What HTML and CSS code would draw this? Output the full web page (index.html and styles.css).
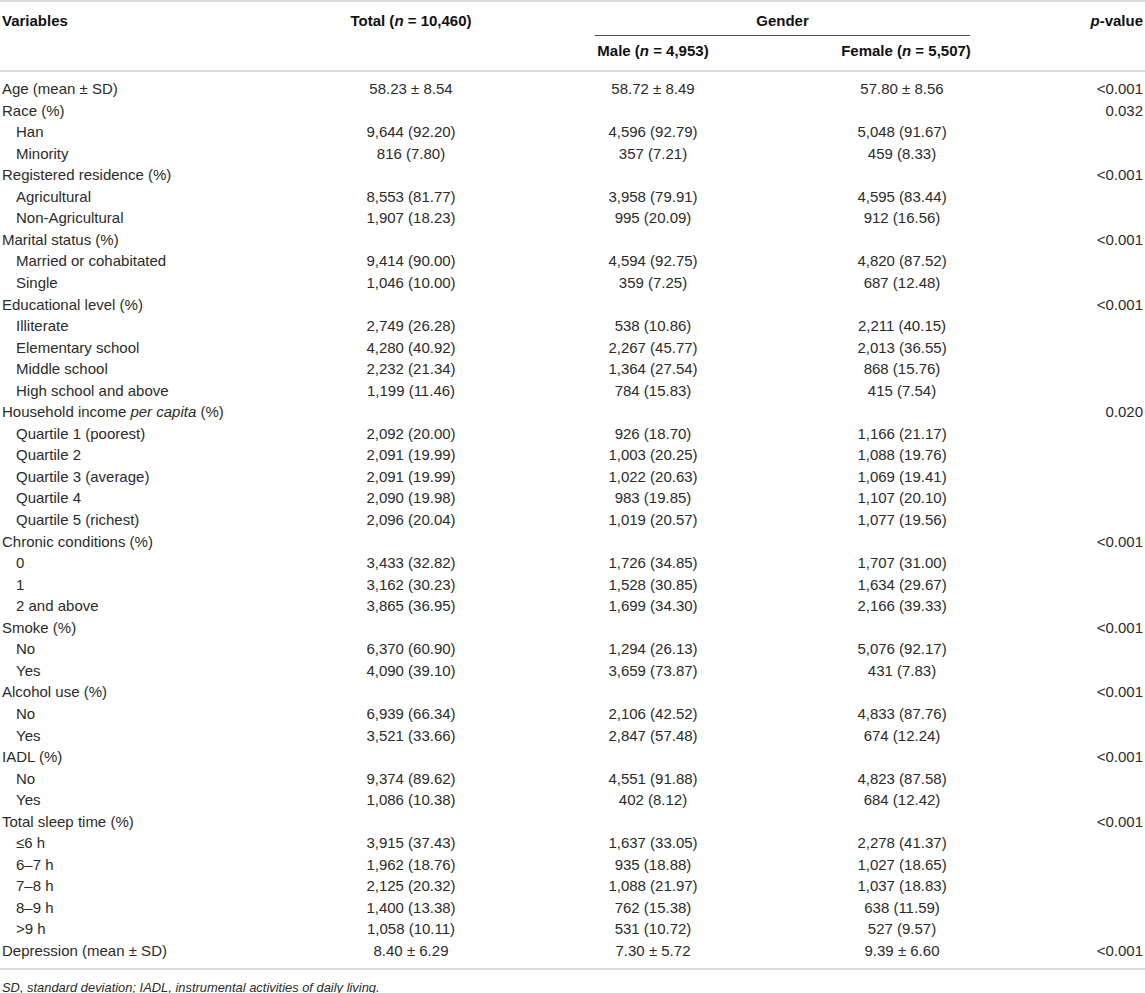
FILE: index.html
```html
<!DOCTYPE html>
<html>
<head>
<meta charset="utf-8">
<link rel="stylesheet" href="styles.css">
</head>
<body>
<table class="tbl">
<colgroup>
<col class="c-var"><col class="c-tot"><col class="c-male"><col class="c-fem"><col class="c-p">
</colgroup>
<thead>
<tr class="h1">
<th rowspan="2" class="var">Variables</th>
<th rowspan="2" class="num">Total (<i>n</i> = 10,460)</th>
<th colspan="2" class="gender"><div class="gender-line">Gender</div></th>
<th rowspan="2" class="p"><i>p</i>-value</th>
</tr>
<tr class="h2">
<th class="num">Male (<i>n</i> = 4,953)</th>
<th class="num fem">Female (<i>n</i> = 5,507)</th>
</tr>
</thead>
<tbody>
<tr class="first"><td class="var">Age (mean ± SD)</td><td class="num">58.23 ± 8.54</td><td class="num">58.72 ± 8.49</td><td class="num">57.80 ± 8.56</td><td class="p">&lt;0.001</td></tr>
<tr><td class="var">Race (%)</td><td></td><td></td><td></td><td class="p">0.032</td></tr>
<tr><td class="var sub">Han</td><td class="num">9,644 (92.20)</td><td class="num">4,596 (92.79)</td><td class="num">5,048 (91.67)</td><td class="p"></td></tr>
<tr><td class="var sub">Minority</td><td class="num">816 (7.80)</td><td class="num">357 (7.21)</td><td class="num">459 (8.33)</td><td class="p"></td></tr>
<tr><td class="var">Registered residence (%)</td><td></td><td></td><td></td><td class="p">&lt;0.001</td></tr>
<tr><td class="var sub">Agricultural</td><td class="num">8,553 (81.77)</td><td class="num">3,958 (79.91)</td><td class="num">4,595 (83.44)</td><td class="p"></td></tr>
<tr><td class="var sub">Non-Agricultural</td><td class="num">1,907 (18.23)</td><td class="num">995 (20.09)</td><td class="num">912 (16.56)</td><td class="p"></td></tr>
<tr><td class="var">Marital status (%)</td><td></td><td></td><td></td><td class="p">&lt;0.001</td></tr>
<tr><td class="var sub">Married or cohabitated</td><td class="num">9,414 (90.00)</td><td class="num">4,594 (92.75)</td><td class="num">4,820 (87.52)</td><td class="p"></td></tr>
<tr><td class="var sub">Single</td><td class="num">1,046 (10.00)</td><td class="num">359 (7.25)</td><td class="num">687 (12.48)</td><td class="p"></td></tr>
<tr><td class="var">Educational level (%)</td><td></td><td></td><td></td><td class="p">&lt;0.001</td></tr>
<tr><td class="var sub">Illiterate</td><td class="num">2,749 (26.28)</td><td class="num">538 (10.86)</td><td class="num">2,211 (40.15)</td><td class="p"></td></tr>
<tr><td class="var sub">Elementary school</td><td class="num">4,280 (40.92)</td><td class="num">2,267 (45.77)</td><td class="num">2,013 (36.55)</td><td class="p"></td></tr>
<tr><td class="var sub">Middle school</td><td class="num">2,232 (21.34)</td><td class="num">1,364 (27.54)</td><td class="num">868 (15.76)</td><td class="p"></td></tr>
<tr><td class="var sub">High school and above</td><td class="num">1,199 (11.46)</td><td class="num">784 (15.83)</td><td class="num">415 (7.54)</td><td class="p"></td></tr>
<tr><td class="var">Household income <i>per capita</i> (%)</td><td></td><td></td><td></td><td class="p">0.020</td></tr>
<tr><td class="var sub">Quartile 1 (poorest)</td><td class="num">2,092 (20.00)</td><td class="num">926 (18.70)</td><td class="num">1,166 (21.17)</td><td class="p"></td></tr>
<tr><td class="var sub">Quartile 2</td><td class="num">2,091 (19.99)</td><td class="num">1,003 (20.25)</td><td class="num">1,088 (19.76)</td><td class="p"></td></tr>
<tr><td class="var sub">Quartile 3 (average)</td><td class="num">2,091 (19.99)</td><td class="num">1,022 (20.63)</td><td class="num">1,069 (19.41)</td><td class="p"></td></tr>
<tr><td class="var sub">Quartile 4</td><td class="num">2,090 (19.98)</td><td class="num">983 (19.85)</td><td class="num">1,107 (20.10)</td><td class="p"></td></tr>
<tr><td class="var sub">Quartile 5 (richest)</td><td class="num">2,096 (20.04)</td><td class="num">1,019 (20.57)</td><td class="num">1,077 (19.56)</td><td class="p"></td></tr>
<tr><td class="var">Chronic conditions (%)</td><td></td><td></td><td></td><td class="p">&lt;0.001</td></tr>
<tr><td class="var sub">0</td><td class="num">3,433 (32.82)</td><td class="num">1,726 (34.85)</td><td class="num">1,707 (31.00)</td><td class="p"></td></tr>
<tr><td class="var sub">1</td><td class="num">3,162 (30.23)</td><td class="num">1,528 (30.85)</td><td class="num">1,634 (29.67)</td><td class="p"></td></tr>
<tr><td class="var sub">2 and above</td><td class="num">3,865 (36.95)</td><td class="num">1,699 (34.30)</td><td class="num">2,166 (39.33)</td><td class="p"></td></tr>
<tr><td class="var">Smoke (%)</td><td></td><td></td><td></td><td class="p">&lt;0.001</td></tr>
<tr><td class="var sub">No</td><td class="num">6,370 (60.90)</td><td class="num">1,294 (26.13)</td><td class="num">5,076 (92.17)</td><td class="p"></td></tr>
<tr><td class="var sub">Yes</td><td class="num">4,090 (39.10)</td><td class="num">3,659 (73.87)</td><td class="num">431 (7.83)</td><td class="p"></td></tr>
<tr><td class="var">Alcohol use (%)</td><td></td><td></td><td></td><td class="p">&lt;0.001</td></tr>
<tr><td class="var sub">No</td><td class="num">6,939 (66.34)</td><td class="num">2,106 (42.52)</td><td class="num">4,833 (87.76)</td><td class="p"></td></tr>
<tr><td class="var sub">Yes</td><td class="num">3,521 (33.66)</td><td class="num">2,847 (57.48)</td><td class="num">674 (12.24)</td><td class="p"></td></tr>
<tr><td class="var">IADL (%)</td><td></td><td></td><td></td><td class="p">&lt;0.001</td></tr>
<tr><td class="var sub">No</td><td class="num">9,374 (89.62)</td><td class="num">4,551 (91.88)</td><td class="num">4,823 (87.58)</td><td class="p"></td></tr>
<tr><td class="var sub">Yes</td><td class="num">1,086 (10.38)</td><td class="num">402 (8.12)</td><td class="num">684 (12.42)</td><td class="p"></td></tr>
<tr><td class="var">Total sleep time (%)</td><td></td><td></td><td></td><td class="p">&lt;0.001</td></tr>
<tr><td class="var sub">≤6 h</td><td class="num">3,915 (37.43)</td><td class="num">1,637 (33.05)</td><td class="num">2,278 (41.37)</td><td class="p"></td></tr>
<tr><td class="var sub">6–7 h</td><td class="num">1,962 (18.76)</td><td class="num">935 (18.88)</td><td class="num">1,027 (18.65)</td><td class="p"></td></tr>
<tr><td class="var sub">7–8 h</td><td class="num">2,125 (20.32)</td><td class="num">1,088 (21.97)</td><td class="num">1,037 (18.83)</td><td class="p"></td></tr>
<tr><td class="var sub">8–9 h</td><td class="num">1,400 (13.38)</td><td class="num">762 (15.38)</td><td class="num">638 (11.59)</td><td class="p"></td></tr>
<tr><td class="var sub">&gt;9 h</td><td class="num">1,058 (10.11)</td><td class="num">531 (10.72)</td><td class="num">527 (9.57)</td><td class="p"></td></tr>
<tr class="last"><td class="var">Depression (mean ± SD)</td><td class="num">8.40 ± 6.29</td><td class="num">7.30 ± 5.72</td><td class="num">9.39 ± 6.60</td><td class="p">&lt;0.001</td></tr>
</tbody>
</table>
<p class="note"><i>SD, standard deviation; IADL, instrumental activities of daily living.</i></p>
</body>
</html>
```
FILE: styles.css
```css
html, body {
  margin: 0;
  padding: 0;
  background: #fff;
}
body {
  font-family: "Liberation Sans", Arial, sans-serif;
  font-size: 15px;
  color: #2b2b2b;
}
.tbl {
  width: 1145px;
  border-collapse: collapse;
  table-layout: fixed;
  border-top: 2px solid #dcdcdc;
}
.c-var { width: 290px; }
.c-tot { width: 242px; }
.c-male { width: 242px; }
.c-fem { width: 256px; }
.c-p { width: 115px; }

th {
  font-weight: bold;
  color: #111;
  line-height: 21.55px;
  padding: 0;
}
.h1 th {
  vertical-align: top;
  padding-top: 8px;
}
.h1 th.gender {
  padding-bottom: 0;
}
.gender-line {
  margin: 0 60px 0 63px;
  padding-bottom: 3px;
  border-bottom: 1px solid #4a4a4a;
  text-align: center;
}
.h2 th {
  padding-top: 4px;
  padding-bottom: 9px;
}
thead {
  border-bottom: 2px solid #dcdcdc;
}
tbody {
  border-bottom: 2px solid #dcdcdc;
}
td {
  padding: 0;
  height: 21.55px;
  line-height: 21.55px;
  white-space: nowrap;
}
tr.first td { padding-top: 6px; }
tr.last td { padding-bottom: 6px; }
.var {
  text-align: left;
  padding-left: 2px;
}
.var.sub {
  padding-left: 16px;
}
.num {
  text-align: center;
}
th.fem {
  padding-left: 8px;
}
.p {
  text-align: right;
  padding-right: 2px;
}
.note {
  margin: 10px 0 0 2px;
  font-size: 12.9px;
  line-height: 16px;
  color: #2b2b2b;
}
```
